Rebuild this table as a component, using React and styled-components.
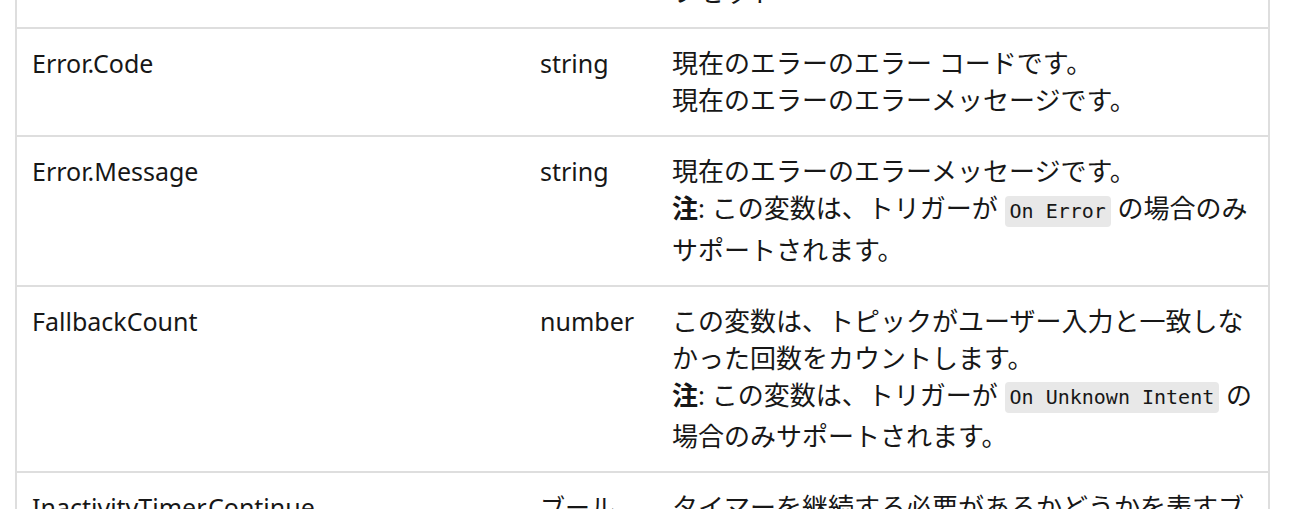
import React from 'react';
import styled, { createGlobalStyle } from 'styled-components';

const GlobalStyle = createGlobalStyle`
  html, body {
    margin: 0;
    padding: 0;
    background: #ffffff;
  }
  body {
    font-family: "Noto Sans", "Noto Sans CJK JP", sans-serif;
    color: #171717;
  }
`;

const Viewport = styled.div`
  height: 509px;
  overflow: hidden;
  padding: 0 30px 0 15px;
`;

// the page is scrolled: only the last line of the first row shows
const Table = styled.table`
  width: 100%;
  margin-top: -79px;
  table-layout: fixed;
  border-collapse: collapse;
  border-left: 2px solid #dedede;
  border-right: 2px solid #dedede;
  font-size: 26px;
  line-height: 37px;
`;

const Row = styled.tr`
  border-bottom: 2px solid #dedede;
`;

const Cell = styled.td`
  padding: 16px 15px;
  vertical-align: top;
  text-align: left;
  font-size: ${(p) => (p.$latin ? '25px' : '26px')};

  strong {
    font-weight: 700;
  }
`;

const Code = styled.code`
  display: inline-block;
  vertical-align: middle;
  margin: 5px 0;
  padding: 0 5px;
  line-height: 31px;
  font-family: "DejaVu Sans Mono", "Liberation Mono", monospace;
  font-size: 20px;
  color: #171717;
  background: #e8e8e8;
  border-radius: 4px;
`;

const rows = [
  {
    name: 'Conversation.LocalTimeZoneOffset',
    type: 'DateTime',
    desc: <>UTC からの現在のローカル タイム ゾーンのオ<br />フセット</>,
  },
  {
    name: 'Error.Code',
    type: 'string',
    desc: <>現在のエラーのエラー コードです。<br />現在のエラーのエラーメッセージです。</>,
  },
  {
    name: 'Error.Message',
    type: 'string',
    desc: (
      <>
        現在のエラーのエラーメッセージです。<br />
        <strong>注</strong>: この変数は、トリガーが <Code>On Error</Code> の場合のみ<br />
        サポートされます。
      </>
    ),
  },
  {
    name: 'FallbackCount',
    type: 'number',
    desc: (
      <>
        この変数は、トピックがユーザー入力と一致しな<br />
        かった回数をカウントします。<br />
        <strong>注</strong>: この変数は、トリガーが <Code>On Unknown Intent</Code> の<br />
        場合のみサポートされます。
      </>
    ),
  },
  {
    name: 'InactivityTimer.Continue',
    type: 'ブール',
    desc: <>タイマーを継続する必要があるかどうかを表すブ<br />ール値です。</>,
  },
];

const App = () => {
  return (
    <>
      <GlobalStyle />
      <Viewport>
        <Table>
          <colgroup>
            <col style={{ width: 509 }} />
            <col style={{ width: 132 }} />
            <col />
          </colgroup>
          <tbody>
            {rows.map((row) => (
              <Row key={row.name}>
                <Cell $latin>{row.name}</Cell>
                <Cell $latin>{row.type}</Cell>
                <Cell>{row.desc}</Cell>
              </Row>
            ))}
          </tbody>
        </Table>
      </Viewport>
    </>
  );
};

export default App;
